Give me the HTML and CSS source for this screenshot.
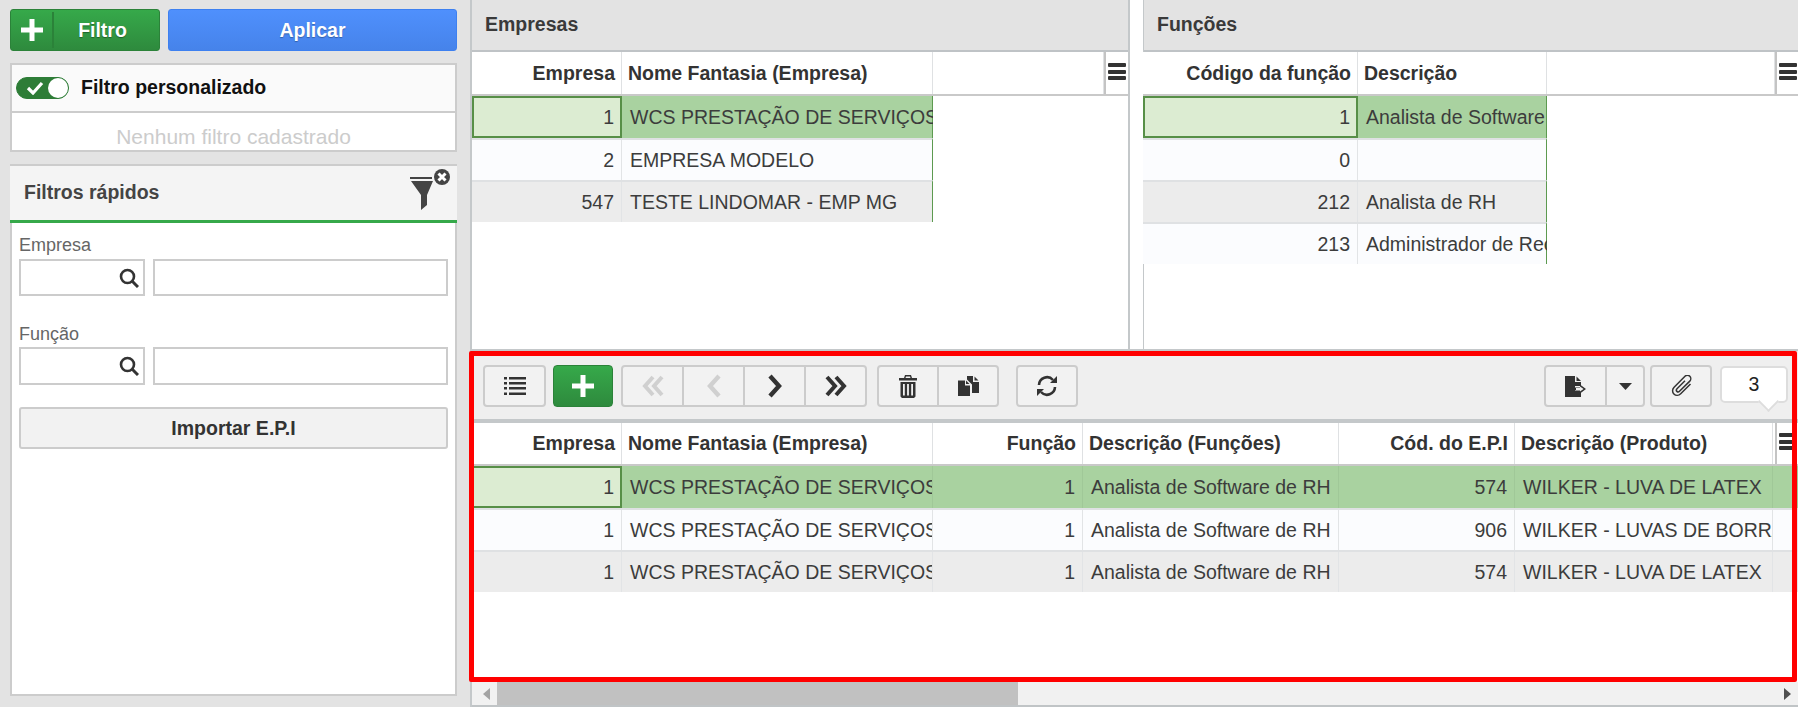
FILE: index.html
```html
<!DOCTYPE html>
<html lang="pt-BR">
<head>
<meta charset="utf-8">
<title>Importar E.P.I</title>
<link rel="stylesheet" href="styles.css">
</head>
<body>
<div class="app">
  <aside class="side">
    <div class="actions">
      <button class="btn-filter"><span class="plus-cell"><svg width="22" height="22" viewBox="0 0 22 22"><path d="M8.5 0h5v8.5H22v5h-8.5V22h-5v-8.5H0v-5h8.5z" fill="#fff"/></svg></span><span class="filter-label">Filtro</span></button>
      <button class="btn-apply">Aplicar</button>
    </div>
    <div class="custom">
      <div class="custom-top">
        <span class="toggle"><svg width="18" height="14" viewBox="0 0 18 14"><path d="M2 7l5 5L16 2" fill="none" stroke="#fff" stroke-width="3.2"/></svg><span class="knob"></span></span>
        <b class="custom-label">Filtro personalizado</b>
      </div>
      <div class="custom-empty">Nenhum filtro cadastrado</div>
    </div>
    <section class="quick">
      <header class="quick-head">
        <span class="quick-title">Filtros rápidos</span>
        <svg class="funnel" width="40" height="42" viewBox="0 0 40 42"><path d="M0 8h22v2H0zM1 12h22l-6 14v10l-6 5V26z" fill="#444"/><circle cx="32" cy="8" r="8" fill="#444"/><path d="M28.5 4.5l7 7M35.500 4.500l-7 7" stroke="#fff" stroke-width="3"/></svg>
      </header>
      <div class="quick-body">
        <div class="field field-first">
          <label class="field-label">Empresa</label>
          <div class="inputs">
            <span class="input code"><svg width="20" height="20" viewBox="0 0 20 20"><circle cx="8.500" cy="8.500" r="6.500" fill="none" stroke="#333" stroke-width="2.600"/><path d="M13 13l6 6" stroke="#333" stroke-width="3"/></svg></span>
            <span class="input wide"></span>
          </div>
        </div>
        <div class="field field-second">
          <label class="field-label">Função</label>
          <div class="inputs inputs-tall">
            <span class="input code"><svg width="20" height="20" viewBox="0 0 20 20"><circle cx="8.500" cy="8.500" r="6.500" fill="none" stroke="#333" stroke-width="2.600"/><path d="M13 13l6 6" stroke="#333" stroke-width="3"/></svg></span>
            <span class="input wide"></span>
          </div>
        </div>
        <button class="btn-import">Importar E.P.I</button>
      </div>
    </section>
  </aside>

  <main class="main">
    <div class="top">
      <section class="panel panel-emp">
        <h2 class="panel-title">Empresas</h2>
        <div class="grid-emp">
          <div class="ghead">
            <div class="hc num">Empresa</div>
            <div class="hc">Nome Fantasia (Empresa)</div>
            <div class="hc"></div>
            <div class="hc menu"><span class="bars"><i></i><i></i><i></i></span></div>
          </div>
          <div class="row sel"><div class="c num focus">1</div><div class="c">WCS PRESTAÇÃO DE SERVIÇOS</div></div>
          <div class="row odd"><div class="c num">2</div><div class="c">EMPRESA MODELO</div></div>
          <div class="row even"><div class="c num">547</div><div class="c">TESTE LINDOMAR - EMP MG</div></div>
        </div>
      </section>
      <section class="panel panel-fun">
        <h2 class="panel-title">Funções</h2>
        <div class="grid-fun">
          <div class="ghead">
            <div class="hc num">Código da função</div>
            <div class="hc">Descrição</div>
            <div class="hc"></div>
            <div class="hc menu"><span class="bars"><i></i><i></i><i></i></span></div>
          </div>
          <div class="row sel"><div class="c num focus">1</div><div class="c">Analista de Software de RH</div></div>
          <div class="row odd"><div class="c num">0</div><div class="c"></div></div>
          <div class="row even"><div class="c num">212</div><div class="c">Analista de RH</div></div>
          <div class="row odd"><div class="c num">213</div><div class="c">Administrador de Recursos</div></div>
        </div>
      </section>
    </div>

    <section class="bottom">
      <div class="toolbar">
        <button class="tb tb-list"><svg width="22" height="20" viewBox="0 0 22 20" fill="#333"><path d="M0 1h3v2.400H0zM5 1h17v2.400H5zM0 6h3v2.400H0zM5 6h17v2.400H5zM0 11h3v2.400H0zM5 11h17v2.400H5zM0 16.500h3v2.400H0zM5 16.500h17v2.400H5z"/></svg></button>
        <button class="tb tb-add"><svg width="22" height="22" viewBox="0 0 22 22"><path d="M8.500 0h5v8.500H22v5h-8.500V22h-5v-8.500H0v-5h8.500z" fill="#fff"/></svg></button>
        <div class="group g-nav">
          <button class="seg"><svg width="22" height="22" viewBox="0 0 22 22" fill="none" stroke="#d0d0d0" stroke-width="4"><path d="M11 2l-8 9 8 9M20 2l-8 9 8 9"/></svg></button>
          <button class="seg"><svg width="14" height="24" viewBox="0 0 14 24" fill="none" stroke="#d0d0d0" stroke-width="4.400"><path d="M12 2L3 12l9 10"/></svg></button>
          <button class="seg"><svg width="14" height="24" viewBox="0 0 14 24" fill="none" stroke="#333" stroke-width="4.400"><path d="M2 2l9 10-9 10"/></svg></button>
          <button class="seg"><svg width="22" height="22" viewBox="0 0 22 22" fill="none" stroke="#333" stroke-width="4"><path d="M2 2l8 9-8 9M11 2l8 9-8 9"/></svg></button>
        </div>
        <div class="group g-edit">
          <button class="seg"><svg width="18" height="23" viewBox="0 0 18 23" fill="#333"><path d="M6 0h6l1 3h5v2.500H0V3h5zM7 1.500L6.500 3h5L11 1.500z" fill-rule="evenodd"/><path d="M1.500 7h15v14.500l-1.500 1.500H3l-1.500-1.500zM4 9v11.500h1.800V9zM8.100 9v11.500h1.800V9zM12.200 9v11.500H14V9z" fill-rule="evenodd"/></svg></button>
          <button class="seg"><svg width="21" height="20" viewBox="0 0 21 20" fill="#333"><path d="M0 4.500h7v5h5V20H0z"/><path d="M8 4.500v3.500h3.500z"/><path d="M9 0h6v6h6v11h-7V8.500L9 3.500z"/><path d="M16.500 .5v4h4z"/></svg></button>
        </div>
        <button class="tb tb-sync"><svg width="22" height="22" viewBox="0 0 22 22" fill="none" stroke="#333" stroke-width="2.600"><path d="M3 10a8 8 0 0 1 14-5"/><path d="M19 12a8 8 0 0 1-14 5"/><path d="M14 8h7V1z" fill="#333" stroke="none"/><path d="M8 14H1v7z" fill="#333" stroke="none"/></svg></button>
        <div class="tools-right">
          <div class="group g-export">
            <button class="seg seg-file"><svg width="21" height="21" viewBox="0 0 21 21" fill="#333"><path d="M0 0h10v6h6v4h-6v5h6v6H0z"/><path d="M11.500 .5v4.500H16z"/><path d="M10 11.500h5V8.500l6 4.500-6 4.500v-3h-5z" fill="#333"/><path d="M15 10.500l3.500 2.500-3.500 2.500v-1.500h-4v-2h4z" fill="#f2f2f2"/></svg></button>
            <button class="seg seg-caret"><svg width="13" height="7" viewBox="0 0 13 7"><path d="M0 0h13L6.500 7z" fill="#333"/></svg></button>
          </div>
          <button class="tb tb-clip"><svg width="23" height="22" viewBox="0 0 23 22" fill="none" stroke="#333" stroke-width="1.500"><path d="M20.500 9l-9.800 9.800c-2 2-5 2-6.800.2s-1.800-4.800.2-6.800L15 1.300c1.300-1.300 3.500-1.300 4.800 0s1.300 3.500 0 4.800L9.500 16.300c-.8.8-1.900.8-2.600.1s-.7-1.800.1-2.600L15 5.800"/></svg></button>
          <div class="counter">3</div>
        </div>
      </div>
      <div class="grid-epi">
        <div class="ghead">
          <div class="hc num">Empresa</div>
          <div class="hc">Nome Fantasia (Empresa)</div>
          <div class="hc num">Função</div>
          <div class="hc">Descrição (Funções)</div>
          <div class="hc num">Cód. do E.P.I</div>
          <div class="hc">Descrição (Produto)</div>
          <div class="hc menu"><span class="bars"><i></i><i></i><i></i></span></div>
        </div>
        <div class="row sel"><div class="c num focus">1</div><div class="c">WCS PRESTAÇÃO DE SERVIÇOS</div><div class="c num">1</div><div class="c">Analista de Software de RH</div><div class="c num">574</div><div class="c">WILKER - LUVA DE LATEX</div><div class="c"></div></div>
        <div class="row odd"><div class="c num">1</div><div class="c">WCS PRESTAÇÃO DE SERVIÇOS</div><div class="c num">1</div><div class="c">Analista de Software de RH</div><div class="c num">906</div><div class="c">WILKER - LUVAS DE BORRACHA</div><div class="c"></div></div>
        <div class="row even"><div class="c num">1</div><div class="c">WCS PRESTAÇÃO DE SERVIÇOS</div><div class="c num">1</div><div class="c">Analista de Software de RH</div><div class="c num">574</div><div class="c">WILKER - LUVA DE LATEX</div><div class="c"></div></div>
      </div>
      <div class="gbody"></div>
      <div class="scrollbar">
        <span class="sb-btn"><svg width="7" height="12" viewBox="0 0 7 12"><path d="M7 0v12L0 6z" fill="#a3a3a3"/></svg></span>
        <span class="sb-thumb"></span>
        <span class="sb-end"><svg width="7" height="12" viewBox="0 0 7 12"><path d="M0 0v12l7-6z" fill="#505050"/></svg></span>
      </div>
      <div class="highlight"></div>
    </section>
  </main>
</div>
</body>
</html>
```
FILE: styles.css
```css
* { box-sizing: border-box; }
html, body { margin: 0; padding: 0; height: 707px; overflow: hidden; }
body { font: 19.5px "Liberation Sans", Arial, sans-serif; color: #3c3c3c; background: #e3e3e3; }
button { font: inherit; cursor: default; padding: 0; margin: 0; }

.app { display: grid; grid-template-columns: 470px 1fr; height: 707px; }

/* Sidebar */
.side { padding: 9px 13px 11px 10px; display: flex; flex-direction: column; background: #e3e3e3; }
.actions { display: flex; gap: 8px; height: 42px; }
.btn-filter { width: 150px; display: flex; align-items: stretch; border: 1px solid #2b8239; border-radius: 3px; background: linear-gradient(#36a94a, #2e8a3d); color: #fff; font-weight: 700; text-shadow: 0 1px 1px rgba(0,0,0,.35); }
.plus-cell { width: 43px; display: flex; align-items: center; justify-content: center; border-right: 2px solid #2b8239; margin: 2px 0; }
.filter-label { flex: 1; display: flex; align-items: center; justify-content: center; padding-right: 8px; }
.btn-apply { flex: 1; border: 1px solid #3d80f0; border-radius: 3px; background: linear-gradient(#4f90fd, #4683ea); color: #fff; font-weight: 700; text-shadow: 0 1px 1px rgba(0,0,0,.3); }

.custom { margin-top: 12px; height: 89px; border: 2px solid #ccc; background: #fff; display: flex; flex-direction: column; }
.custom-top { height: 46px; background: #fafafa; display: flex; align-items: center; gap: 12px; padding-left: 4px; }
.toggle { width: 53px; height: 22px; border-radius: 11px; background: #2e7d37; border: 1px solid #2e7d37; display: flex; align-items: center; justify-content: space-between; padding-left: 9px; }
.knob { width: 20px; height: 20px; border-radius: 50%; background: #fff; }
.custom-label { color: #111; margin-top: -2px; }
.custom-empty { flex: 1; border-top: 2px solid #ccc; display: flex; align-items: center; justify-content: center; color: #ccc; font-size: 21px; padding-top: 10px; }

.quick { margin-top: 12px; flex: 1; border: 2px solid #ccc; background: #fff; display: flex; flex-direction: column; }
.quick-head { height: 57px; flex: none; background: #f4f4f4; border-bottom: 3px solid #36a94a; display: flex; justify-content: space-between; padding: 0 7px 0 14px; margin: 0 -2px; }
.quick-title { font-weight: 700; color: #444; line-height: 48px; margin-top: 2px; }
.funnel { margin-top: 3px; }
.quick-body { padding: 12px 7px 0; display: flex; flex-direction: column; }
.field-label { display: block; line-height: 20px; color: #666; font-size: 18px; margin-bottom: 3px; }
.field-first .field-label { margin-bottom: 4px; }
.field-second { margin-top: 28px; }
.inputs { display: flex; gap: 8px; height: 37px; }
.inputs-tall { height: 38px; }
.input { display: flex; align-items: center; justify-content: flex-end; border: 2px solid #ccc; background: #fff; padding-right: 4px; }
.code { width: 126px; }
.wide { flex: 1; }
.btn-import { margin-top: 22px; height: 42px; border: 2px solid #ccc; border-radius: 3px; background: #f2f2f2; font-weight: 700; color: #333; }

/* Main */
.main { border-left: 2px solid #c4c8ca; background: #fff; display: flex; flex-direction: column; min-width: 0; }
.top { height: 351px; flex: none; display: flex; gap: 13px; border-bottom: 2px solid #c4c8ca; }
.panel { display: flex; flex-direction: column; min-width: 0; }
.panel-emp { width: 658px; flex: none; border-right: 2px solid #c4c8ca; }
.panel-fun { flex: 1; border-left: 1px solid #c4c8ca; }
.panel-title { margin: 0; height: 52px; flex: none; background: #e3e3e3; border-bottom: 2px solid #bfc3c6; font-size: 19.5px; font-weight: 700; color: #3a3a3a; line-height: 48px; padding-left: 13px; }

/* Grids */
.ghead { display: grid; height: 44px; border-bottom: 2px solid #c9c9c9; background: #fff; }
.hc { display: flex; align-items: center; padding: 0 6px; border-right: 1px solid #dfe1e3; font-weight: 700; color: #333; white-space: nowrap; overflow: hidden; min-width: 0; }
.hc.menu { border-right: 0; border-left: 2px solid #c4c4c4; padding: 11px 0 0 2px; align-items: flex-start; }
.bars { display: flex; flex-direction: column; gap: 2.500px; width: 18px; }
.bars i { display: block; height: 4px; background: #333; border-radius: 1px; }
.row { display: grid; height: 42px; border-top: 2px solid #dfe1e3; }
.row.sel { border-top: 0; background: #a9d2a0; }
.row.odd { background: #fbfcfe; }
.row.even { background: #ececec; }
.c { display: flex; align-items: center; padding: 0 0 0 8px; border-right: 1px solid #e2e4e6; white-space: nowrap; overflow: hidden; min-width: 0; color: #3c3c3c; }
.sel .c { border-right-color: #a0c898; }
.num { justify-content: flex-end; }
.c.num { padding: 0 7px 0 0; }
.c.focus { background: #dcecd2; border: 2px solid #578f47; padding-right: 6px; }

.grid-emp .ghead { grid-template-columns: 150px 311px 171px 1fr; }
.grid-emp .row { grid-template-columns: 150px 311px; width: 461px; border-right: 1px solid #5d9a50; }
.grid-fun { margin-left: -1px; }
.grid-fun .ghead { grid-template-columns: 215px 189px 228px 1fr; }
.grid-fun .row { grid-template-columns: 215px 189px; width: 404px; border-right: 1px solid #5d9a50; }
.grid-fun .row .c:last-child, .grid-emp .row .c:last-child { border-right: 0; }
.grid-epi .ghead { height: 43px; grid-template-columns: 150px 311px 150px 256px 176px 258px 1fr; }
.grid-epi .ghead .menu { margin-left: 2px; padding-top: 10px; }
.grid-epi .row { grid-template-columns: 150px 311px 150px 256px 176px 258px 1fr; }

/* Bottom */
.bottom { flex: 1; display: flex; flex-direction: column; position: relative; min-height: 0; }
.toolbar { height: 72px; flex: none; background: #efefef; border-bottom: 4px solid #c4c8ca; display: flex; align-items: flex-start; padding: 14px 10px 0 11px; }
.tb, .group { height: 42px; border: 2px solid #ccc; border-radius: 4px; background: #f2f2f2; }
.tb { display: flex; align-items: center; justify-content: center; }
.tb-list { width: 63px; }
.tb-add { width: 60px; margin-left: 7px; background: linear-gradient(#36a94a, #2e8a3d); border: 1px solid #2b8239; }
.group { display: flex; }
.g-nav { width: 246px; margin-left: 8px; }
.g-edit { width: 122px; margin-left: 10px; }
.seg { flex: 1; border: 0; border-right: 2px solid #ccc; background: transparent; display: flex; align-items: center; justify-content: center; min-width: 0; }
.seg:last-child { border-right: 0; }
.tb-sync { width: 62px; margin-left: 17px; }
.tools-right { margin-left: auto; display: flex; align-items: flex-start; }
.g-export { width: 101px; }
.seg-file { flex: none; width: 61px; }
.seg-caret { flex: 1; }
.tb-clip { width: 62px; margin-left: 5px; }
.counter { width: 68px; height: 37px; margin-left: 8px; margin-top: 1px; background: #fff; border: 2px solid #ddd; border-radius: 5px; display: flex; align-items: center; justify-content: center; color: #222; position: relative; }
.counter::after { content: ""; position: absolute; right: 10px; bottom: -8px; width: 13px; height: 13px; background: #fff; border-right: 2px solid #ddd; border-bottom: 2px solid #ddd; transform: rotate(45deg); }

.gbody { flex: 1; background: #fff; }
.scrollbar { height: 25px; flex: none; background: #f1f1f1; border-bottom: 2px solid #c0c4c6; display: flex; align-items: stretch; }
.sb-btn { width: 25px; display: flex; align-items: center; justify-content: center; padding-left: 4px; }
.sb-thumb { width: 521px; background: #c1c1c1; }
.sb-end { margin-left: auto; width: 22px; display: flex; align-items: center; justify-content: center; }
.highlight { position: absolute; left: -3px; right: 1px; top: 0; bottom: 25px; border: 5px solid #f00; border-radius: 2px; pointer-events: none; }
```
